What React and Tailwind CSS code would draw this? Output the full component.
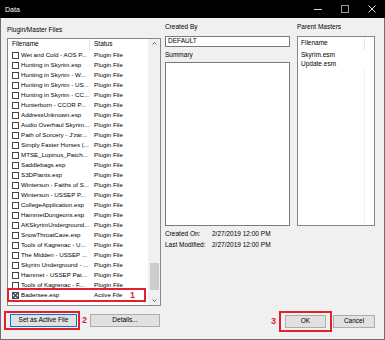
const plugins = [
  "Wet and Cold - AOS P...",
  "Hunting in Skyrim.esp",
  "Hunting in Skyrim - W...",
  "Hunting in Skyrim - US...",
  "Hunting in Skyrim - CC...",
  "Hunterborn - CCOR P...",
  "AddressUnknown.esp",
  "Audio Overhaul Skyrim...",
  "Path of Sorcery - J'zar...",
  "Simply Faster Horses (...",
  "MTSE_Lupinus_Patch...",
  "Saddlebags.esp",
  "S3DPlants.esp",
  "Wintersun - Faiths of S...",
  "Wintersun - USSEP P...",
  "CollegeApplication.esp",
  "HammetDungeons.esp",
  "AKSkyrimUnderground...",
  "SnowThroatCave.esp",
  "Tools of Kagrenac - U...",
  "The Midden - USSEP ...",
  "Skyrim Underground - ...",
  "Hammet - USSEP Pat...",
  "Tools of Kagrenac - F...",
];

const Checkbox = ({ checked }) => (
  <span className="w-[7px] h-[7px] border border-[#444] bg-white shrink-0 flex items-center justify-center">
    {checked && (
      <svg width="5" height="5" viewBox="0 0 5 5">
        <path d="M0 0L5 5M5 0L0 5" stroke="#1d3b6e" strokeWidth="1.4" />
      </svg>
    )}
  </span>
);

const Row = ({ name, status, checked }) => (
  <div className="h-[10px] flex items-center text-[6.2px]">
    <div className="w-[82px] shrink-0 flex items-center gap-[2px] pl-[4px] whitespace-nowrap">
      <Checkbox checked={checked} />
      <span>{name}</span>
    </div>
    <span className="pl-[4px] whitespace-nowrap">{status}</span>
  </div>
);

const Button = ({ children, className }) => (
  <div
    className={
      "h-[13px] bg-[#e1e1e1] border flex items-center justify-center " +
      className
    }
  >
    {children}
  </div>
);

const App = () => {
  return (
    <div className="w-[385px] h-[340px] flex flex-col bg-[#f0f0f0] text-black text-[6.5px] leading-none font-['Liberation_Sans',Arial,sans-serif]">
      {/* title bar */}
      <div className="h-[18px] bg-black flex items-center text-white shrink-0">
        <span className="pl-[5px] text-[7px]">Data</span>
        <div className="ml-auto flex h-full">
          <div className="w-[27px] flex items-center justify-center">
            <svg width="8" height="8" viewBox="0 0 8 8">
              <path d="M0 4.5H8" stroke="#d8d8d8" strokeWidth="1" />
            </svg>
          </div>
          <div className="w-[27px] flex items-center justify-center">
            <svg width="8" height="8" viewBox="0 0 8 8">
              <rect x="0.5" y="0.5" width="7" height="7" fill="none" stroke="#9a9a9a" strokeWidth="1" />
            </svg>
          </div>
          <div className="w-[27px] flex items-center justify-center">
            <svg width="8" height="8" viewBox="0 0 8 8">
              <path d="M0.5 0.5L7.5 7.5M7.5 0.5L0.5 7.5" stroke="#e0e0e0" strokeWidth="1" />
            </svg>
          </div>
        </div>
      </div>

      <div className="flex-1 flex border-x border-b border-[#6f6f6f]">
        {/* left column */}
        <div className="ml-[6px] w-[154px] flex flex-col">
          <div className="mt-[8px] h-[9px] flex items-center">Plugin/Master Files</div>
          <div className="relative mt-[3px] h-[268px] border border-[#828790] bg-white flex">
            <div className="flex-1 flex flex-col">
              <div className="h-[11px] flex items-center">
                <div className="w-[82px] h-full pl-[4px] flex items-center border-r border-[#e5e5e5]">
                  Filename
                </div>
                <span className="pl-[4px]">Status</span>
              </div>
              {plugins.map((p, i) => (
                <Row key={i} name={p} status="Plugin File" />
              ))}
              <Row name="Badersee.esp" status="Active File" checked />
            </div>
            <div className="w-[12px] bg-[#f0f0f0] flex flex-col">
              <div className="h-[9px] flex items-center justify-center">
                <svg width="5" height="3" viewBox="0 0 5 3">
                  <path d="M0.5 2.5L2.5 0.5L4.5 2.5" fill="none" stroke="#606060" strokeWidth="1" />
                </svg>
              </div>
              <div className="flex-1 flex justify-center">
                <div className="mt-[215px] w-[9px] h-[27px] bg-[#cdcdcd]" />
              </div>
              <div className="h-[10px] flex items-center justify-center">
                <svg width="5" height="3" viewBox="0 0 5 3">
                  <path d="M0.5 0.5L2.5 2.5L4.5 0.5" fill="none" stroke="#606060" strokeWidth="1" />
                </svg>
              </div>
            </div>
            {/* annotation 1 */}
            <div className="absolute left-[-1px] top-[249px] w-[139px] h-[14px] border-2 border-[#e3202d] flex items-center justify-end pr-[9px]">
              <span className="text-[#e3202d] text-[9px] font-bold">1</span>
            </div>
          </div>
          <div className="mt-[8px] flex">
            <div className="relative ml-[3px]">
              <Button className="w-[67px] border-[#0078d7]">Set as Active File</Button>
              <div className="absolute left-[-6px] right-[-3px] top-[-3px] bottom-[-3px] border-2 border-[#e3202d]" />
              <span className="absolute left-[72px] top-[2px] text-[#e3202d] text-[9px] font-bold">2</span>
            </div>
            <Button className="ml-[13px] w-[70px] border-[#adadad]">Details...</Button>
          </div>
        </div>

        {/* right area */}
        <div className="flex-1 flex flex-col">
          <div className="flex">
            {/* middle column */}
            <div className="ml-[4px] w-[125px] flex flex-col">
              <div className="mt-[5px] h-[9px] flex items-center">Created By</div>
              <div className="mt-[4px] h-[11px] border border-[#7a7a7a] bg-white flex items-center pl-[2px]">
                DEFAULT
              </div>
              <div className="mt-[4px] h-[9px] flex items-center">Summary</div>
              <div className="mt-[2px] h-[164px] border border-[#7a7a7a] bg-white" />
              <div className="mt-[4px] h-[9px] flex items-center">
                <span className="w-[47px]">Created On:</span>
                <span>2/27/2019 12:00 PM</span>
              </div>
              <div className="mt-[2px] h-[9px] flex items-center">
                <span className="w-[47px]">Last Modified:</span>
                <span>2/27/2019 12:00 PM</span>
              </div>
            </div>

            {/* parent masters */}
            <div className="ml-[7px] w-[78px] flex flex-col">
              <div className="mt-[5px] h-[9px] flex items-center">Parent Masters</div>
              <div className="mt-[4px] h-[190px] border border-[#828790] bg-white flex flex-col">
                <div className="h-[13px] flex">
                  <div className="w-[67px] pl-[3px] flex items-center border-r border-[#e5e5e5]">
                    Filename
                  </div>
                </div>
                <div className="h-[10px] pl-[3px] flex items-center">Skyrim.esm</div>
                <div className="h-[9px] pl-[3px] flex items-center">Update.esm</div>
                <div className="flex-1 flex">
                  <div className="w-[67px] border-r border-[#f2f2f2]" />
                </div>
              </div>
            </div>
          </div>

          <div className="mt-auto mb-[11px] mr-[9px] flex justify-end">
            <div className="relative">
              <Button className="w-[41px] border-[#adadad]">OK</Button>
              <div className="absolute left-[-6px] right-[-6px] top-[-4px] bottom-[-4px] border-2 border-[#e3202d]" />
              <span className="absolute left-[-14px] top-[2px] text-[#e3202d] text-[9px] font-bold">3</span>
            </div>
            <Button className="ml-[7px] w-[42px] border-[#adadad]">Cancel</Button>
          </div>
        </div>
      </div>
    </div>
  );
};

export default App;
